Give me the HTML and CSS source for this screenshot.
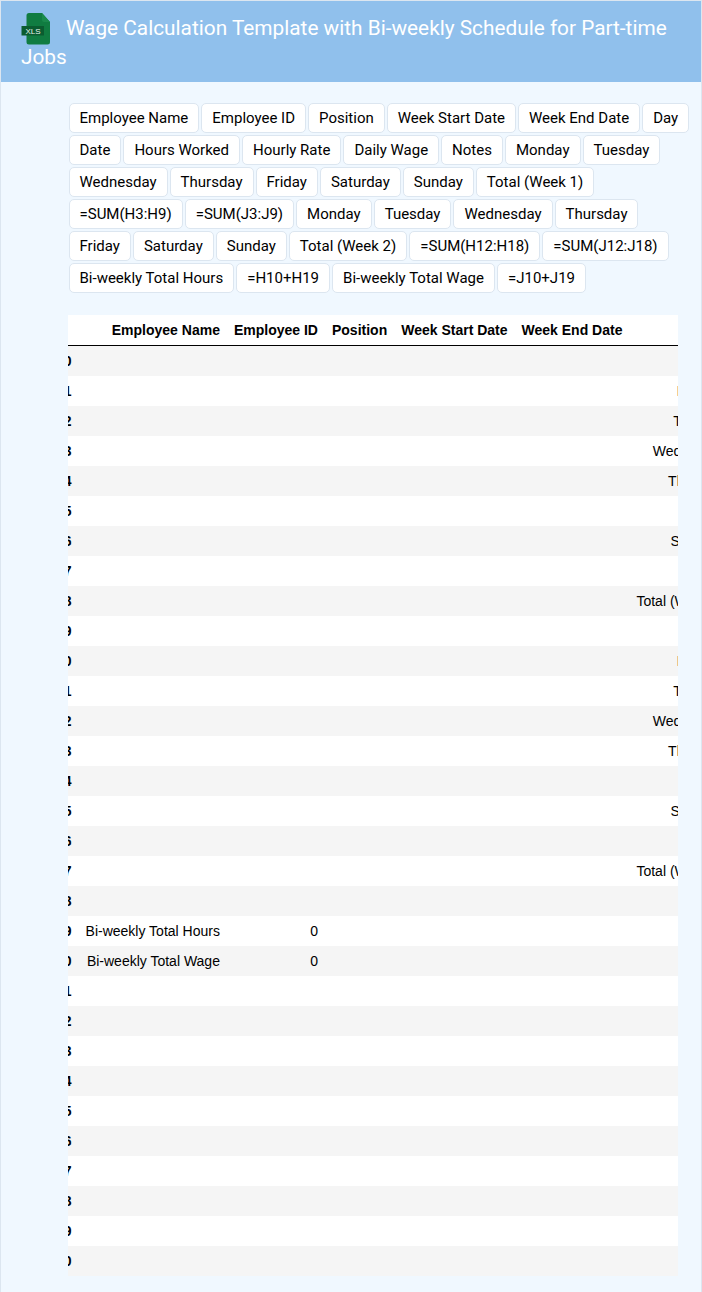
FILE: index.html
```html
<!DOCTYPE html>
<html lang="en">
<head>
<meta charset="utf-8">
<title>Wage Calculation Template</title>
<link rel="stylesheet" href="styles.css">
</head>
<body>
<header class="top">
<h1 class="title"><svg class="logo" viewBox="0 0 30 32" width="30" height="32" aria-hidden="true"><path class="logo-sheet" d="M8 0H21L29 9V29a2.500 2.500 0 0 1-2.500 2.500H8A2.500 2.500 0 0 1 5.500 29V2.500A2.500 2.500 0 0 1 8 0Z"/><path class="logo-fold" d="M21 0L29 9H23a2 2 0 0 1-2-2Z"/><rect class="logo-band" x="0.500" y="13" width="22.500" height="9.500"/><text class="logo-text" x="12" y="20.500" text-anchor="middle">XLS</text></svg>Wage Calculation Template with Bi-weekly Schedule for Part-time Jobs</h1>
</header>
<main class="content">
<ul class="tags">
<li class="tag">Employee Name</li><li class="tag">Employee ID</li><li class="tag">Position</li><li class="tag">Week Start Date</li><li class="tag">Week End Date</li><li class="tag">Day</li>
<li class="tag">Date</li><li class="tag">Hours Worked</li><li class="tag">Hourly Rate</li><li class="tag">Daily Wage</li><li class="tag">Notes</li><li class="tag">Monday</li><li class="tag">Tuesday</li>
<li class="tag">Wednesday</li><li class="tag">Thursday</li><li class="tag">Friday</li><li class="tag">Saturday</li><li class="tag">Sunday</li><li class="tag">Total (Week 1)</li>
<li class="tag">=SUM(H3:H9)</li><li class="tag">=SUM(J3:J9)</li><li class="tag">Monday</li><li class="tag">Tuesday</li><li class="tag">Wednesday</li><li class="tag">Thursday</li>
<li class="tag">Friday</li><li class="tag">Saturday</li><li class="tag">Sunday</li><li class="tag">Total (Week 2)</li><li class="tag">=SUM(H12:H18)</li><li class="tag">=SUM(J12:J18)</li>
<li class="tag">Bi-weekly Total Hours</li><li class="tag">=H10+H19</li><li class="tag">Bi-weekly Total Wage</li><li class="tag">=J10+J19</li>
</ul>
<div class="table-wrap">
<table class="sheet">
<thead><tr><th></th><th>Employee Name</th><th>Employee ID</th><th>Position</th><th>Week Start Date</th><th>Week End Date</th><th>Day</th></tr></thead>
<tbody>
<tr><th>0</th><td></td><td></td><td></td><td></td><td></td><td></td></tr>
<tr><th>1</th><td></td><td></td><td></td><td></td><td></td><td>Monday</td></tr>
<tr><th>2</th><td></td><td></td><td></td><td></td><td></td><td>Tuesday</td></tr>
<tr><th>3</th><td></td><td></td><td></td><td></td><td></td><td>Wednesday</td></tr>
<tr><th>4</th><td></td><td></td><td></td><td></td><td></td><td>Thursday</td></tr>
<tr><th>5</th><td></td><td></td><td></td><td></td><td></td><td>Friday</td></tr>
<tr><th>6</th><td></td><td></td><td></td><td></td><td></td><td>Saturday</td></tr>
<tr><th>7</th><td></td><td></td><td></td><td></td><td></td><td>Sunday</td></tr>
<tr><th>8</th><td></td><td></td><td></td><td></td><td></td><td>Total (Week 1)</td></tr>
<tr><th>9</th><td></td><td></td><td></td><td></td><td></td><td></td></tr>
<tr><th>10</th><td></td><td></td><td></td><td></td><td></td><td>Monday</td></tr>
<tr><th>11</th><td></td><td></td><td></td><td></td><td></td><td>Tuesday</td></tr>
<tr><th>12</th><td></td><td></td><td></td><td></td><td></td><td>Wednesday</td></tr>
<tr><th>13</th><td></td><td></td><td></td><td></td><td></td><td>Thursday</td></tr>
<tr><th>14</th><td></td><td></td><td></td><td></td><td></td><td>Friday</td></tr>
<tr><th>15</th><td></td><td></td><td></td><td></td><td></td><td>Saturday</td></tr>
<tr><th>16</th><td></td><td></td><td></td><td></td><td></td><td>Sunday</td></tr>
<tr><th>17</th><td></td><td></td><td></td><td></td><td></td><td>Total (Week 2)</td></tr>
<tr><th>18</th><td></td><td></td><td></td><td></td><td></td><td></td></tr>
<tr><th>19</th><td>Bi-weekly Total Hours</td><td>0</td><td></td><td></td><td></td><td></td></tr>
<tr><th>20</th><td>Bi-weekly Total Wage</td><td>0</td><td></td><td></td><td></td><td></td></tr>
<tr><th>21</th><td></td><td></td><td></td><td></td><td></td><td></td></tr>
<tr><th>22</th><td></td><td></td><td></td><td></td><td></td><td></td></tr>
<tr><th>23</th><td></td><td></td><td></td><td></td><td></td><td></td></tr>
<tr><th>24</th><td></td><td></td><td></td><td></td><td></td><td></td></tr>
<tr><th>25</th><td></td><td></td><td></td><td></td><td></td><td></td></tr>
<tr><th>26</th><td></td><td></td><td></td><td></td><td></td><td></td></tr>
<tr><th>27</th><td></td><td></td><td></td><td></td><td></td><td></td></tr>
<tr><th>28</th><td></td><td></td><td></td><td></td><td></td><td></td></tr>
<tr><th>29</th><td></td><td></td><td></td><td></td><td></td><td></td></tr>
<tr><th>30</th><td></td><td></td><td></td><td></td><td></td><td></td></tr>
</tbody>
</table>
</div>
</main>
</body>
</html>
```
FILE: styles.css
```css
html, body {
  margin: 0;
  padding: 0;
}
body {
  border: 1px solid #dce6f0;
  border-bottom: 0;
  background: #f0f8ff;
  font-family: Roboto, sans-serif;
  color: #000;
  overflow: hidden;
}
.top {
  background: #90c0ec;
  padding: 13px 20px 10px;
  height: 58px;
}
.title {
  margin: 0;
  font-size: 20.800px;
  font-weight: 400;
  line-height: 29px;
  color: #fff;
}
.logo {
  display: inline-block;
  vertical-align: middle;
  margin: -6px 15px -4px 0;
}
.logo-sheet { fill: #107c41; }
.logo-fold { fill: #1a8a4c; }
.logo-band { fill: #0a5c30; }
.logo-text {
  fill: #e8f3ec;
  font-family: "Liberation Sans", sans-serif;
  font-size: 8px;
}
.content {
  padding: 21px 5px 16px 67px;
}
.tags {
  list-style: none;
  margin: 0 0 0 -0.500px;
  padding: 0;
  display: flex;
  flex-wrap: wrap;
  gap: 2px 1px;
}
.tag {
  margin-left: 1px;
  padding: 0 10px;
  height: 28px;
  line-height: 28px;
  font-size: 15px;
  background: #fff;
  border: 1px solid #dce6f0;
  border-radius: 5px;
  white-space: nowrap;
}
.table-wrap {
  width: 610px;
  margin-top: 22px;
  overflow: hidden;
  background: #fff;
}
.sheet {
  margin-left: -19px;
  border-collapse: collapse;
  font-family: "Liberation Sans", sans-serif;
  font-size: 14px;
  line-height: 16px;
  white-space: nowrap;
}
.sheet th, .sheet td {
  padding: 7px;
  text-align: right;
  height: 16px;
}
.sheet thead th {
  border-bottom: 1px solid #000;
}
.sheet tbody tr:nth-child(odd) {
  background: #f5f5f5;
}
```
